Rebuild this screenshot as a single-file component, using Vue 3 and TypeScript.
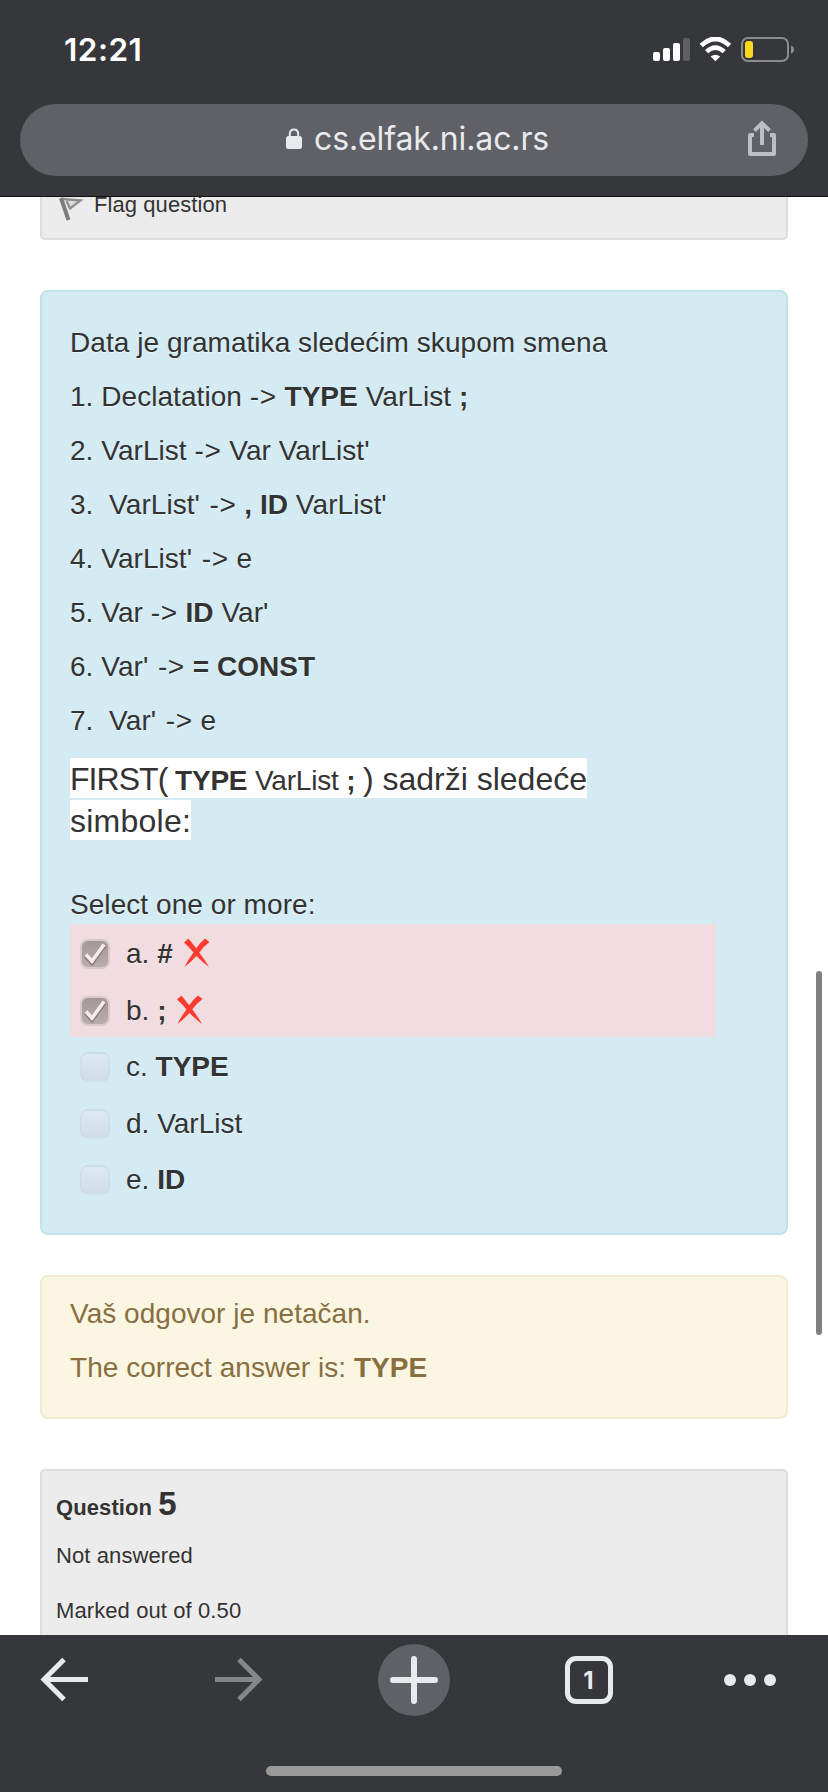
<script setup lang="ts">
interface Part {
  text: string
  bold?: boolean
}
interface Answer {
  letter: string
  text: string
  bold: boolean
  wrong: boolean
}

const rules: Part[][] = [
  [{ text: 'Data je gramatika sledećim skupom smena' }],
  [{ text: '1. Declatation -> ' }, { text: 'TYPE', bold: true }, { text: ' VarList ' }, { text: ';', bold: true }],
  [{ text: "2. VarList -> Var VarList'" }],
  [{ text: "3. \u00a0VarList' -> " }, { text: ', ID', bold: true }, { text: " VarList'" }],
  [{ text: "4. VarList' -> e" }],
  [{ text: '5. Var -> ' }, { text: 'ID', bold: true }, { text: " Var'" }],
  [{ text: "6. Var' -> " }, { text: '= CONST', bold: true }],
  [{ text: "7. \u00a0Var' -> e" }],
]

const answers: Answer[] = [
  { letter: 'a', text: '#', bold: true, wrong: true },
  { letter: 'b', text: ';', bold: true, wrong: true },
  { letter: 'c', text: 'TYPE', bold: true, wrong: false },
  { letter: 'd', text: 'VarList', bold: false, wrong: false },
  { letter: 'e', text: 'ID', bold: true, wrong: false },
]

// Primes and arrows get a little more room than the letters around them.
const pieces = (text: string): string[] => text.split(/('|->)/).filter(Boolean)
</script>

<template>
  <div class="phone">
    <header class="top">
      <div class="status">
        <span class="time">12:21</span>
        <svg class="indicators" width="144" height="28" viewBox="0 0 144 28">
          <g fill="#fff">
            <rect x="1" y="15" width="7" height="9" rx="2" />
            <rect x="11" y="11" width="7" height="13" rx="2" />
            <rect x="21" y="6" width="7" height="18" rx="2" />
            <rect x="31" y="1" width="7" height="23" rx="2" fill="#5f6063" />
            <path d="M63.4 24.2 L58.6 19.6 Q63.4 15.8 68.2 19.6 Z" />
          </g>
          <path d="M49.2 8.4 Q63.4 -4.6 77.6 8.4" fill="none" stroke="#fff" stroke-width="4.8" />
          <path d="M54.6 14.6 Q63.4 6.6 72.2 14.6" fill="none" stroke="#fff" stroke-width="4.6" />
          <rect x="90" y="1" width="46" height="23" rx="6" fill="none" stroke="#8b8c8f" stroke-width="2" />
          <rect x="93" y="4" width="8" height="17" rx="3" fill="#f9d71c" />
          <path d="M139 8.4 Q142 9.5 142 12.5 Q142 15.5 139 16.6 Z" fill="#8b8c8f" />
        </svg>
      </div>
      <div class="address">
        <svg class="lock" width="18" height="22" viewBox="0 0 18 22">
          <rect x="1" y="8" width="16" height="13" rx="2.5" fill="#e8eaed" />
          <path d="M4.8 9 V6 Q4.8 1.4 9 1.4 Q13.2 1.4 13.2 6 V9" fill="none" stroke="#e8eaed" stroke-width="2" />
        </svg>
        <span class="host">cs.elfak.ni.ac.rs</span>
        <svg class="share" width="30" height="38" viewBox="0 0 30 38" fill="none" stroke="#bdbec3" stroke-width="4">
          <path d="M7 15 H3 V34 H27 V15 H23" stroke-linejoin="round" />
          <path d="M15 25 V4" />
          <path d="M7.4 10.6 L15 3.2 L22.6 10.6" />
        </svg>
      </div>
    </header>

    <main class="page">
      <section class="info flagged">
        <svg class="flag" width="26" height="26" viewBox="0 0 26 26">
          <path d="M3 1 L10.5 23" fill="none" stroke="#7d7d7d" stroke-width="4" />
          <path d="M5 2 L22.5 3.5 L12 11.5 L8.5 4" fill="#ddd" stroke="#8f8f8f" stroke-width="2.4" />
        </svg>
        <span>Flag question</span>
      </section>

      <section class="question">
        <p v-for="(rule, i) in rules" :key="i" class="rule">
          <span v-for="(part, j) in rule" :key="j" :class="{ bold: part.bold }"><span v-for="(piece, k) in pieces(part.text)" :key="k" :class="{ prime: piece === '\'', arrow: piece === '->' }">{{ piece }}</span></span>
        </p>
        <p class="prompt"><span class="mark"><span class="first">FIRST(</span><span class="inner">&nbsp;<b>TYPE</b> VarList <b>;</b>&nbsp;</span>) sadrži sledeće<br><span class="symbols">simbole:</span></span></p>
        <p class="select">Select one or more:</p>
        <div class="answers">
          <div v-for="a in answers" :key="a.letter" class="answer" :class="{ wrong: a.wrong }">
            <span class="box" :class="{ checked: a.wrong }">
              <svg v-if="a.wrong" width="30" height="30" viewBox="0 0 30 30" fill="none">
                <path d="M6 16.5 L12 23 L24 6.5" stroke="#8a7c7d" stroke-width="5.5" />
                <path d="M6 15.5 L12 22 L24 5.5" stroke="#f5ebeb" stroke-width="3.8" />
              </svg>
            </span>
            <span class="label">{{ a.letter }}. <span :class="{ bold: a.bold }">{{ a.text }}</span></span>
            <svg v-if="a.wrong" class="cross" width="28" height="30" viewBox="0 0 28 30">
              <path d="M1 4.5 L5.5 .5 Q9 5 13.2 10.2 Q17.5 4.2 22 .5 L26.5 4 Q20.5 8.6 16.3 14.4 Q22 21.8 26 29 Q19.2 23.8 13.5 18 Q8 24 1.5 29 Q5 21.5 10.5 14.4 Q5.8 8.8 1 4.5 Z" fill="#fb3b32" />
            </svg>
          </div>
        </div>
      </section>

      <section class="feedback">
        <p>Vaš odgovor je netačan.</p>
        <p class="correct">The correct answer is: <b>TYPE</b></p>
      </section>

      <section class="info next">
        <h3>Question <span class="number">5</span></h3>
        <p>Not answered</p>
        <p class="marks">Marked out of 0.50</p>
      </section>

      <div class="scrollbar"></div>
    </main>

    <footer class="toolbar">
      <svg width="828" height="90" viewBox="0 0 828 90" fill="none">
        <path d="M88 44.5 H44 M64 24.5 L44 44.5 L64 64.5" stroke="#e8eaed" stroke-width="5" />
        <path d="M215 44.5 H259 M239 24.5 L259 44.5 L239 64.5" stroke="#85868a" stroke-width="5" />
        <circle cx="414" cy="45" r="36" fill="#5f6166" />
        <path d="M393 45 H435 M414 24 V66" stroke="#e8eaed" stroke-width="6" stroke-linecap="round" />
        <rect x="567.5" y="23.5" width="43" height="43" rx="8.5" stroke="#e8eaed" stroke-width="5" />
        <text x="588.5" y="54" text-anchor="middle" class="count">1</text>
        <g fill="#e8eaed">
          <circle cx="730" cy="45" r="6" />
          <circle cx="750" cy="45" r="6" />
          <circle cx="770" cy="45" r="6" />
        </g>
      </svg>
      <div class="home"></div>
    </footer>
  </div>
</template>

<style>
body {
  margin: 0;
  background: #fff;
}
</style>

<style scoped>
.phone {
  width: 828px;
  height: 1792px;
  display: flex;
  flex-direction: column;
  overflow: hidden;
  background: #fff;
  color: #333;
  font-family: "Liberation Sans", Arial, sans-serif;
}
p,
h3 {
  margin: 0;
}
.top {
  flex: none;
  box-sizing: border-box;
  height: 197px;
  background: #36373b;
  border-bottom: 1px solid #111;
}
.status {
  height: 104px;
  box-sizing: border-box;
  padding: 30px 32px 0 64px;
  display: flex;
  justify-content: space-between;
}
.time {
  font: 600 31.5px/40px Inter, sans-serif;
  letter-spacing: 0.5px;
  color: #fff;
}
.indicators {
  margin-top: 7px;
}
.address {
  height: 72px;
  margin: 0 20px;
  border-radius: 36px;
  background: #5f6166;
  display: flex;
  align-items: center;
}
.lock {
  margin: -2px 0 0 265px;
}
.host {
  margin: -2px 0 0 11px;
  width: 240px;
  font: 400 32px/40px Inter, sans-serif;
  letter-spacing: -0.12px;
  color: #e8eaed;
  white-space: nowrap;
}
.share {
  margin-left: 193px;
  margin-top: -3px;
}
.page {
  flex: none;
  position: relative;
  height: 1438px;
  overflow: hidden;
}
.info {
  box-sizing: border-box;
  margin: 0 40px;
  background: #ececec;
  border: 2px solid #dcdcdc;
}
.flagged {
  height: 43px;
  border-top: 0;
  border-radius: 0 0 5px 5px;
  display: flex;
  padding-left: 16px;
  font-size: 22px;
  line-height: 26px;
}
.flagged span {
  margin: -5px 0 0 10px;
  letter-spacing: 0.08px;
}
.question {
  box-sizing: border-box;
  height: 945px;
  margin: 50px 40px 0;
  padding: 31px 28px;
  background: #d5ebf3;
  border: 2px solid #bfe2e9;
  border-radius: 8px;
  font-size: 28px;
  line-height: 40px;
  text-shadow: 0 1px 0 rgba(255, 255, 255, 0.5);
}
.rule {
  height: 54px;
  white-space: pre;
  letter-spacing: 0.05px;
}
.prime {
  letter-spacing: 1.8px;
}
.arrow {
  letter-spacing: 0.6px;
}
.bold,
b {
  font-weight: 700;
}
.prompt {
  margin-top: 3px;
  height: 103px;
  line-height: 42px;
  font-size: 32px;
  white-space: nowrap;
}
.prompt .mark {
  background: #fff;
  padding: 3px 0 1px;
  text-shadow: none;
}
.first {
  letter-spacing: -0.95px;
}
.inner {
  font-size: 28px;
  line-height: 0;
  letter-spacing: -0.2px;
}
.symbols {
  letter-spacing: 0.25px;
}
.select {
  margin-top: 24px;
  height: 39px;
  letter-spacing: 0.06px;
}
.answers {
  width: 646px;
}
.answer {
  height: 56.6px;
  display: flex;
  align-items: flex-start;
}
.wrong {
  background: #f1dddf;
}
.box {
  box-sizing: border-box;
  width: 30px;
  height: 30px;
  margin: 15px 16px 0 10px;
  border: 2px solid rgba(200, 215, 228, 0.5);
  border-radius: 8px;
  background: linear-gradient(#dceaf5, #cfdde8);
}
.box.checked {
  border-color: #d8c9cb;
  background: linear-gradient(#a39799, #b9adaf);
}
.box svg {
  display: block;
  margin: -2px;
}
.label {
  margin-top: 10px;
}
.cross {
  margin: 14px 0 0 10px;
}
.feedback {
  box-sizing: border-box;
  height: 144px;
  margin: 40px 40px 0;
  padding: 17px 28px;
  background: #faf6e2;
  border: 2px solid #f2ebd2;
  border-radius: 8px;
  color: #886e40;
  font-size: 28px;
  line-height: 40px;
  letter-spacing: 0.03px;
}
.correct {
  margin-top: 14px;
}
.next {
  height: 200px;
  margin-top: 50px;
  padding: 13px 14px;
  border-radius: 5px;
  font-size: 22px;
  line-height: 40px;
  letter-spacing: 0.1px;
}
h3 {
  font-size: 22px;
  height: 52px;
}
.number {
  font-size: 33px;
}
.marks {
  margin-top: 15px;
}
.scrollbar {
  position: absolute;
  left: 816px;
  top: 774px;
  width: 6px;
  height: 364px;
  border-radius: 3px;
  background: #808080;
}
.toolbar {
  flex: none;
  height: 157px;
  background: #36373b;
}
.toolbar svg {
  display: block;
}
.count {
  font: 700 24px Inter, sans-serif;
  fill: #e8eaed;
}
.home {
  width: 296px;
  height: 10px;
  margin: 41px auto 0;
  border-radius: 5px;
  background: #9a9a9a;
}
</style>
